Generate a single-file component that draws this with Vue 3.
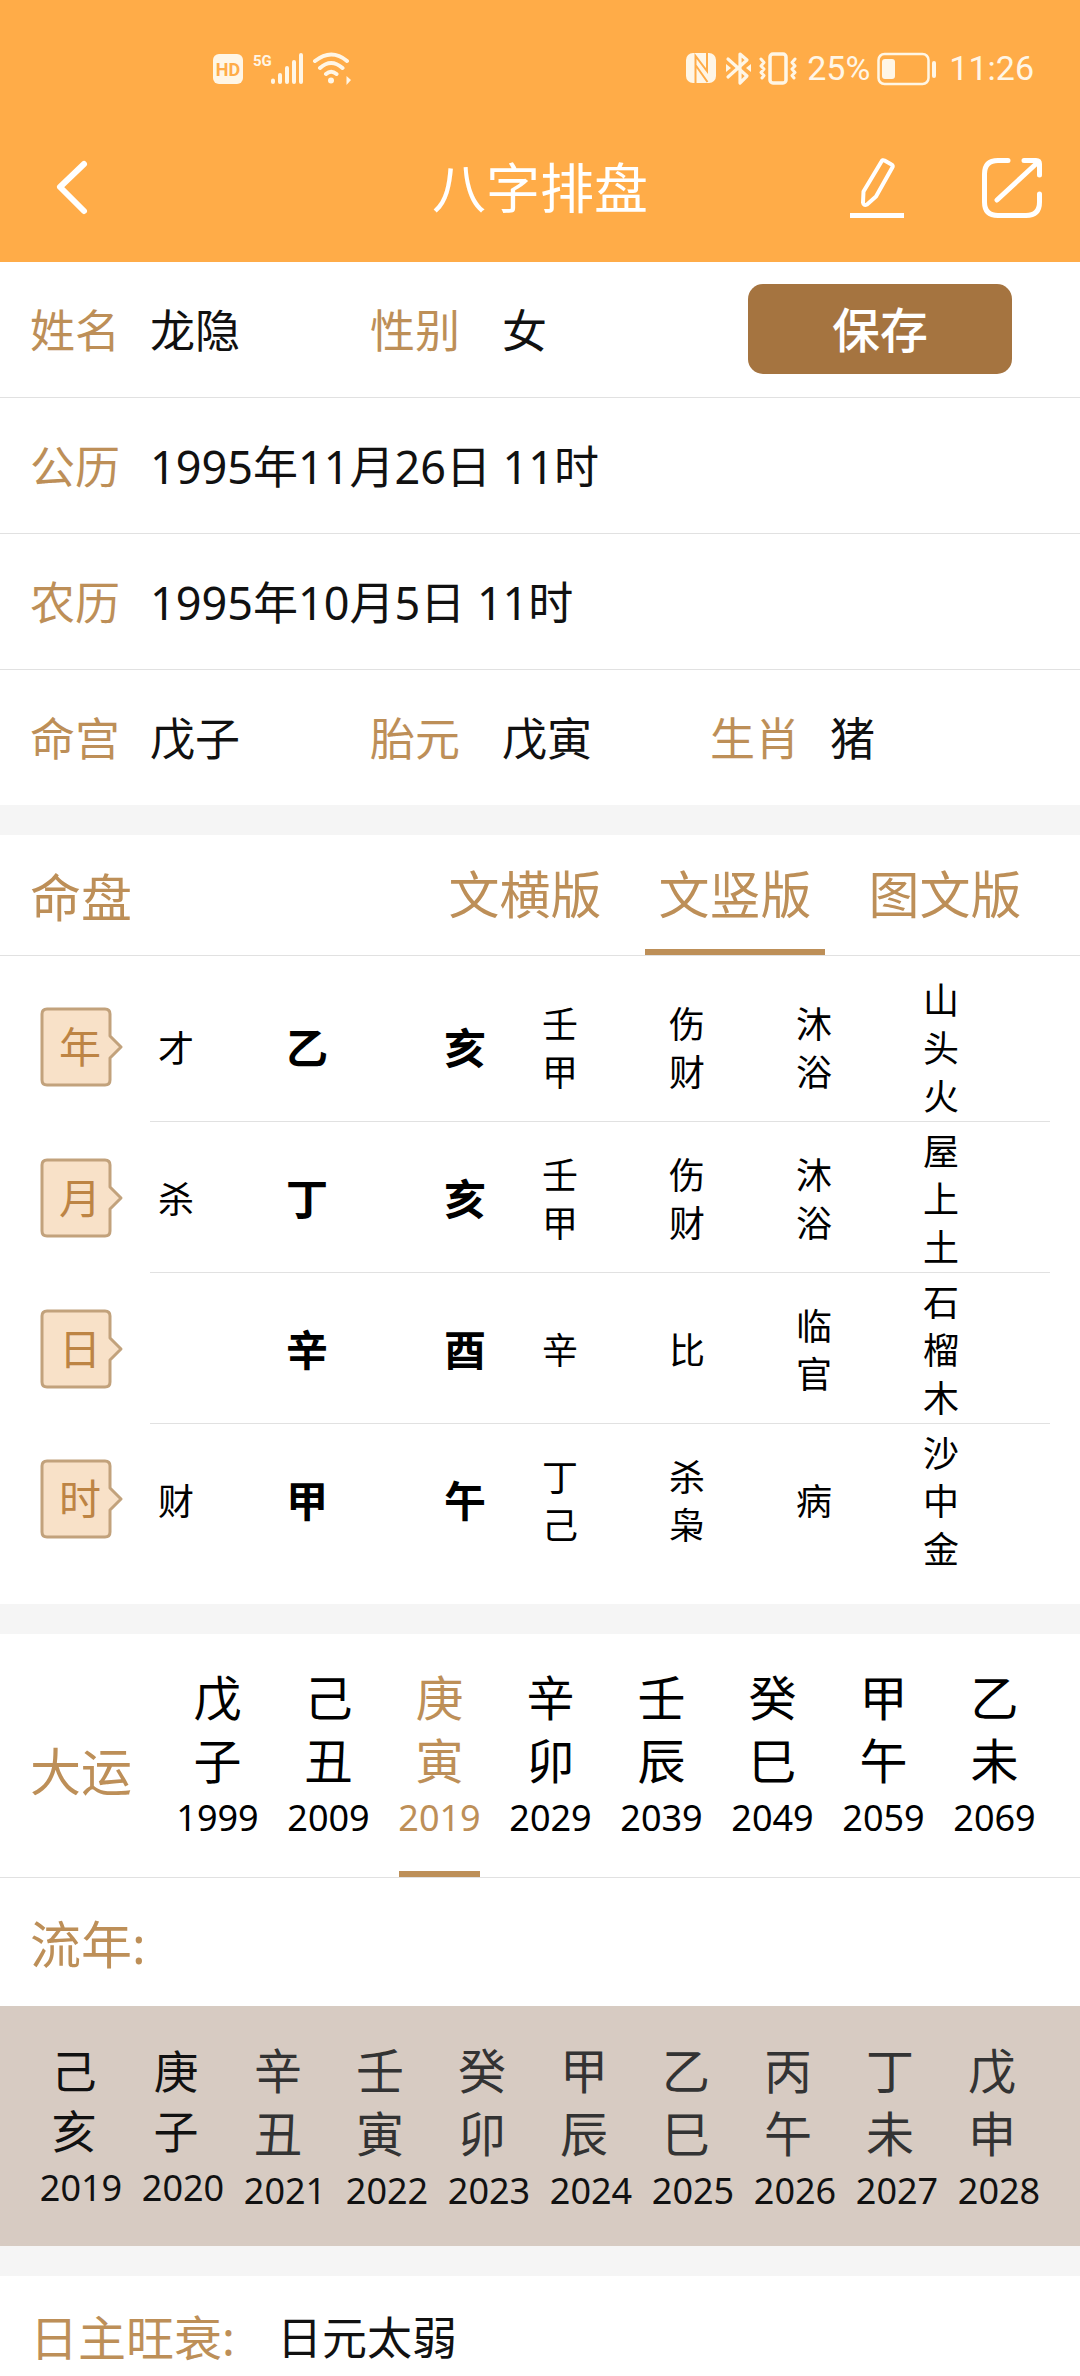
<script setup>
import { ref } from 'vue'

// 版式切换
const tabs = ['文横版', '文竖版', '图文版']
const activeTab = ref('文竖版')

// 四柱
const pillars = [
  { name: '年', star: '才', stem: '乙', branch: '亥', hidden: '壬甲', gods: '伤财', stage: '沐浴', sound: '山头火' },
  { name: '月', star: '杀', stem: '丁', branch: '亥', hidden: '壬甲', gods: '伤财', stage: '沐浴', sound: '屋上土' },
  { name: '日', star: '', stem: '辛', branch: '酉', hidden: '辛', gods: '比', stage: '临官', sound: '石榴木' },
  { name: '时', star: '财', stem: '甲', branch: '午', hidden: '丁己', gods: '杀枭', stage: '病', sound: '沙中金' }
]

// 大运
const decades = [
  { name: '戊子', year: 1999 },
  { name: '己丑', year: 2009 },
  { name: '庚寅', year: 2019 },
  { name: '辛卯', year: 2029 },
  { name: '壬辰', year: 2039 },
  { name: '癸巳', year: 2049 },
  { name: '甲午', year: 2059 },
  { name: '乙未', year: 2069 }
]
const activeDecade = ref(2019)

// 流年
const years = [
  { name: '己亥', year: 2019, past: true },
  { name: '庚子', year: 2020, past: true },
  { name: '辛丑', year: 2021 },
  { name: '壬寅', year: 2022 },
  { name: '癸卯', year: 2023 },
  { name: '甲辰', year: 2024 },
  { name: '乙巳', year: 2025 },
  { name: '丙午', year: 2026 },
  { name: '丁未', year: 2027 },
  { name: '戊申', year: 2028 }
]
</script>

<template>
  <div class="page">
    <header class="header">
      <!-- 状态栏 -->
      <div class="status-bar">
        <svg class="status-left" width="142" height="36" viewBox="0 0 142 36">
          <rect x="0" y="4" width="30" height="30" rx="6" fill="#fff6e6" />
          <text x="15" y="25.500" text-anchor="middle" font-size="18" font-weight="700" fill="#ffac48">HD</text>
          <text x="40" y="16" font-size="15" font-weight="700" fill="#fff6e6">5G</text>
          <g stroke="#fff6e6" stroke-width="4" stroke-linecap="round">
            <path d="M60 30.500v1.500M67 25v7M74 18v14M81 12v20M88 5v27" />
          </g>
          <g fill="none" stroke="#fff6e6" stroke-width="4" stroke-linecap="round">
            <path d="M102 11q16.500-13 32 0M107 18q11-10 22.500 0M113 24q5-4.500 10.500 0" />
          </g>
          <circle cx="118" cy="30.500" r="3" fill="#fff6e6" />
          <path d="M133.500 26v9l4.500-5z" fill="#fff6e6" />
        </svg>
        <div class="status-right">
          <svg width="112" height="36" viewBox="0 0 112 36">
            <rect x="0" y="3" width="30" height="30" rx="7" fill="#fff6e6" />
            <path d="M9.500 33V6l11.500 15V3M9.500 15l12 17" fill="none" stroke="#ffac48" stroke-width="2" />
            <g fill="none" stroke="#fff6e6" stroke-width="3.200" stroke-linejoin="round" stroke-linecap="round">
              <path d="M42 9l19 17-7 7V4l7 6-19 17" />
            </g>
            <path d="M40 14v8l5-4zM65 14v8l-5-4z" fill="#fff6e6" />
            <rect x="84" y="4" width="16" height="29" rx="3" fill="none" stroke="#fff6e6" stroke-width="3.500" />
            <g fill="none" stroke="#fff6e6" stroke-width="3" stroke-linejoin="round" stroke-linecap="round">
              <path d="M75 9l3 3.500-3 3.500 3 3-3 3.500 3 3-2 2.500M109 9l-3 3.500 3 3.500-3 3 3 3.500-3 3 2 2.500" />
            </g>
          </svg>
          <span class="battery-text">25%</span>
          <svg width="60" height="36" viewBox="0 0 60 36">
            <rect x="1.500" y="4" width="50" height="30" rx="6" fill="none" stroke="#fff6e6" stroke-width="2.500" />
            <rect x="5" y="9" width="13" height="20" rx="3" fill="#fff6e6" />
            <rect x="55" y="11" width="4" height="17" rx="2" fill="#fff6e6" />
          </svg>
          <span class="time">11:26</span>
        </div>
      </div>

      <!-- 导航栏 -->
      <nav class="nav">
        <button class="icon-btn" aria-label="返回">
          <svg width="36" height="60" viewBox="0 0 36 60">
            <path d="M30 6L6 29l24 24" fill="none" stroke="#fff" stroke-width="6" stroke-linecap="round" stroke-linejoin="round" />
          </svg>
        </button>
        <h1 class="nav-title">八字排盘</h1>
        <div class="nav-actions">
          <button class="icon-btn" aria-label="编辑">
            <svg width="54" height="60" viewBox="0 0 54 60">
              <path d="M34.500 2.500l7 4q2 1 .8 3L26 38.500l-9 8q-3.500 1.500-4-2l.5-11L31.500 3.500q1-2 3-1z" fill="none" stroke="#fff" stroke-width="4" stroke-linejoin="round" />
              <path d="M0 57.500h54" stroke="#fff" stroke-width="5" />
            </svg>
          </button>
          <button class="icon-btn" aria-label="分享">
            <svg width="60" height="60" viewBox="0 0 60 60" fill="none" stroke="#fff" stroke-width="5" stroke-linecap="round" stroke-linejoin="round">
              <path d="M26 2.500H16Q2.500 2.500 2.500 16v28Q2.500 57.500 16 57.500h28Q57.500 57.500 57.500 44V36" />
              <path d="M42 2.500h12q3.500 0 3.500 3.500v11M55 5L15 42" />
            </svg>
          </button>
        </div>
      </nav>
    </header>

    <!-- 基本信息 -->
    <section>
      <div class="info-row">
        <div class="field"><span class="label">姓名</span><span>龙隐</span></div>
        <div class="field wide-label"><span class="label">性别</span><span>女</span></div>
        <div class="field save-field"><button class="save-btn">保存</button></div>
      </div>
      <div class="info-row">
        <div class="field"><span class="label">公历</span><span>1995年11月26日 11时</span></div>
      </div>
      <div class="info-row">
        <div class="field"><span class="label">农历</span><span>1995年10月5日 11时</span></div>
      </div>
      <div class="info-row">
        <div class="field"><span class="label">命宫</span><span>戊子</span></div>
        <div class="field wide-label"><span class="label">胎元</span><span>戊寅</span></div>
        <div class="field"><span class="label">生肖</span><span>猪</span></div>
      </div>
    </section>

    <!-- 命盘 -->
    <section class="block">
      <div class="chart-head">
        <h2 class="section-title chart-title">命盘</h2>
        <div class="tabs">
          <button
            v-for="tab in tabs"
            :key="tab"
            class="tab"
            :class="{ active: tab === activeTab }"
            @click="activeTab = tab"
          >{{ tab }}</button>
        </div>
      </div>
      <table class="pillars">
        <colgroup>
          <col class="col-name">
          <col class="col-star">
          <col class="col-stem">
          <col class="col-branch">
          <col span="4" class="col-rest">
        </colgroup>
        <tbody>
          <tr v-for="p in pillars" :key="p.name">
            <th scope="row">
              <div class="badge">
                <svg width="84" height="80" viewBox="0 0 84 80">
                  <path d="M7 2h58q5 0 5 5v22l11 11-11 11v22q0 5-5 5H7q-5 0-5-5V7q0-5 5-5z" fill="#f8e1c8" stroke="#c2a27c" stroke-width="3" stroke-linejoin="round" />
                </svg>
                <span>{{ p.name }}</span>
              </div>
            </th>
            <td class="star">{{ p.star }}</td>
            <td class="strong">{{ p.stem }}</td>
            <td class="strong">{{ p.branch }}</td>
            <td><span v-for="c in p.hidden" :key="c" class="char">{{ c }}</span></td>
            <td><span v-for="c in p.gods" :key="c" class="char">{{ c }}</span></td>
            <td><span v-for="c in p.stage" :key="c" class="char">{{ c }}</span></td>
            <td><span v-for="c in p.sound" :key="c" class="char">{{ c }}</span></td>
          </tr>
        </tbody>
      </table>
    </section>

    <!-- 大运 -->
    <section class="block">
      <div class="decades">
        <h2 class="section-title decades-title">大运</h2>
        <div class="decade-list">
          <button
            v-for="d in decades"
            :key="d.year"
            class="decade"
            :class="{ active: d.year === activeDecade }"
            @click="activeDecade = d.year"
          >
            <span v-for="c in d.name" :key="c" class="gz">{{ c }}</span>
            <span class="year">{{ d.year }}</span>
          </button>
        </div>
      </div>
      <h2 class="section-title years-title">流年:</h2>
      <div class="years">
        <button v-for="y in years" :key="y.year" class="year-item" :class="{ past: y.past }">
          <span v-for="c in y.name" :key="c" class="gz">{{ c }}</span>
          <span class="year">{{ y.year }}</span>
        </button>
      </div>
    </section>

    <!-- 日主旺衰 -->
    <section class="block strength">
      <span class="strength-label">日主旺衰:</span>
      <span>日元太弱</span>
    </section>
  </div>
</template>

<style>
body {
  margin: 0;
  background: #fff;
}
</style>

<style scoped>
.page {
  font-family: "Noto Sans", "Noto Sans CJK SC", sans-serif;
  font-size: 45px;
  line-height: 60px;
  color: #111;
}

button {
  font-family: inherit;
  padding: 0;
  border: none;
  background: none;
  cursor: pointer;
}

h1,
h2 {
  margin: 0;
  font-weight: 400;
}

svg {
  display: block;
}

/* 顶部 */
.header {
  background: #ffac48;
}

.status-bar {
  display: flex;
  justify-content: space-between;
  padding: 50px 46px 28px 213px;
  font-family: Roboto, sans-serif;
  font-size: 34px;
  line-height: 36px;
  color: #fff6e6;
}

.status-right {
  display: flex;
  align-items: center;
}

.battery-text {
  margin: 0 7px 0 9px;
}

.time {
  margin-left: 12px;
}

.nav {
  display: grid;
  grid-template-columns: 1fr auto 1fr;
  align-items: center;
  height: 148px;
  padding: 0 38px 0 54px;
  color: #fff;
}

.nav-title {
  font-size: 54px;
  padding-right: 16px;
}

.nav-actions {
  display: flex;
  justify-content: flex-end;
  gap: 78px;
}

.icon-btn {
  justify-self: start;
}

/* 基本信息 */
.info-row {
  display: flex;
  align-items: center;
  height: 135px;
  padding: 0 30px;
  border-bottom: 1px solid #e1e1e1;
}

.info-row:last-child {
  border-bottom: none;
}

.field {
  display: flex;
  flex: 0 0 calc(100% / 3);
  padding-top: 3px;
  white-space: nowrap;
}

.label {
  flex: 0 0 120px;
  color: #bd8f58;
}

.wide-label .label {
  flex-basis: 132px;
}

.save-field {
  justify-content: center;
  padding: 0 0 2px;
}

.save-btn {
  width: 264px;
  height: 90px;
  padding-bottom: 4px;
  border-radius: 15px;
  background: #a57440;
  color: #fff;
  font-size: 48px;
  font-weight: 500;
}

/* 分区 */
.block {
  border-top: 30px solid #f5f5f5;
}

.section-title {
  font-size: 51px;
  color: #bd8f58;
}

/* 命盘 */
.chart-head {
  display: flex;
  align-items: center;
  justify-content: space-between;
  padding: 0 45px 0 30px;
  border-bottom: 1px solid #e1e1e1;
}

.chart-title {
  padding-top: 4px;
}

.tabs {
  display: flex;
  gap: 30px;
}

.tab {
  width: 180px;
  height: 120px;
  border-bottom: 6px solid transparent;
  font-size: 51px;
  color: #bd8f58;
  white-space: nowrap;
}

.tab.active {
  border-bottom-color: #bd8f58;
}

.pillars {
  width: calc(100% - 30px);
  margin: 15px 0 30px;
  table-layout: fixed;
  border-spacing: 0;
  font-family: "Noto Sans CJK SC", sans-serif;
  font-size: 36px;
  line-height: 48px;
  color: #000;
}

.col-name {
  width: 150px;
}

.col-star {
  width: 136px;
}

.col-stem {
  width: 158px;
}

.col-branch {
  width: 98px;
}

.col-rest {
  width: 127px;
}

.pillars th,
.pillars td {
  height: 150px;
  padding: 0;
  text-align: left;
  vertical-align: middle;
}

.pillars td {
  border-bottom: 1px solid #e1e1e1;
}

.pillars tr:last-child td {
  border-bottom: none;
}

.pillars .star {
  padding-left: 8px;
}

.pillars .strong {
  font-size: 42px;
  font-weight: 700;
}

.char {
  display: block;
}

.badge {
  display: grid;
  align-items: center;
  margin-left: 40px;
  font-family: "Noto Sans", "Noto Sans CJK SC", sans-serif;
  font-size: 42px;
  font-weight: 400;
  color: #bd8444;
}

.badge svg,
.badge span {
  grid-area: 1 / 1;
}

.badge span {
  padding-left: 19px;
}

/* 大运 */
.decades {
  display: flex;
  padding: 0 45px 0 30px;
  border-bottom: 1px solid #e1e1e1;
}

.decades-title {
  align-self: center;
  flex: 0 0 147px;
  padding-top: 30px;
}

.decade-list {
  display: flex;
  flex: 1;
  justify-content: space-between;
}

.decade {
  display: flex;
  flex-direction: column;
  align-items: center;
  width: 81px;
  padding: 32px 0 27px;
  border-bottom: 6px solid transparent;
  color: #000;
}

.decade.active {
  color: #bd8f58;
  border-bottom-color: #bd8f58;
}

.gz {
  display: block;
  font-size: 48px;
  line-height: 63px;
}

.year {
  display: block;
  font-size: 36px;
  line-height: 52px;
}

/* 流年 */
.years-title {
  padding: 36px 30px 32px;
}

.years {
  display: flex;
  align-items: center;
  height: 236px;
  padding: 4px 30px 0;
  background: #d7cbc2;
}

.year-item {
  flex: 1;
  color: #111;
}

.year-item .gz {
  padding-right: 14px;
  color: #333;
}

.year-item.past .gz {
  font-size: 45px;
  line-height: 60px;
  color: #111;
}

/* 日主旺衰 */
.strength {
  display: flex;
  gap: 42px;
  padding: 32px 30px 8px;
}

.strength-label {
  font-size: 48px;
  color: #bd8f58;
}
</style>
